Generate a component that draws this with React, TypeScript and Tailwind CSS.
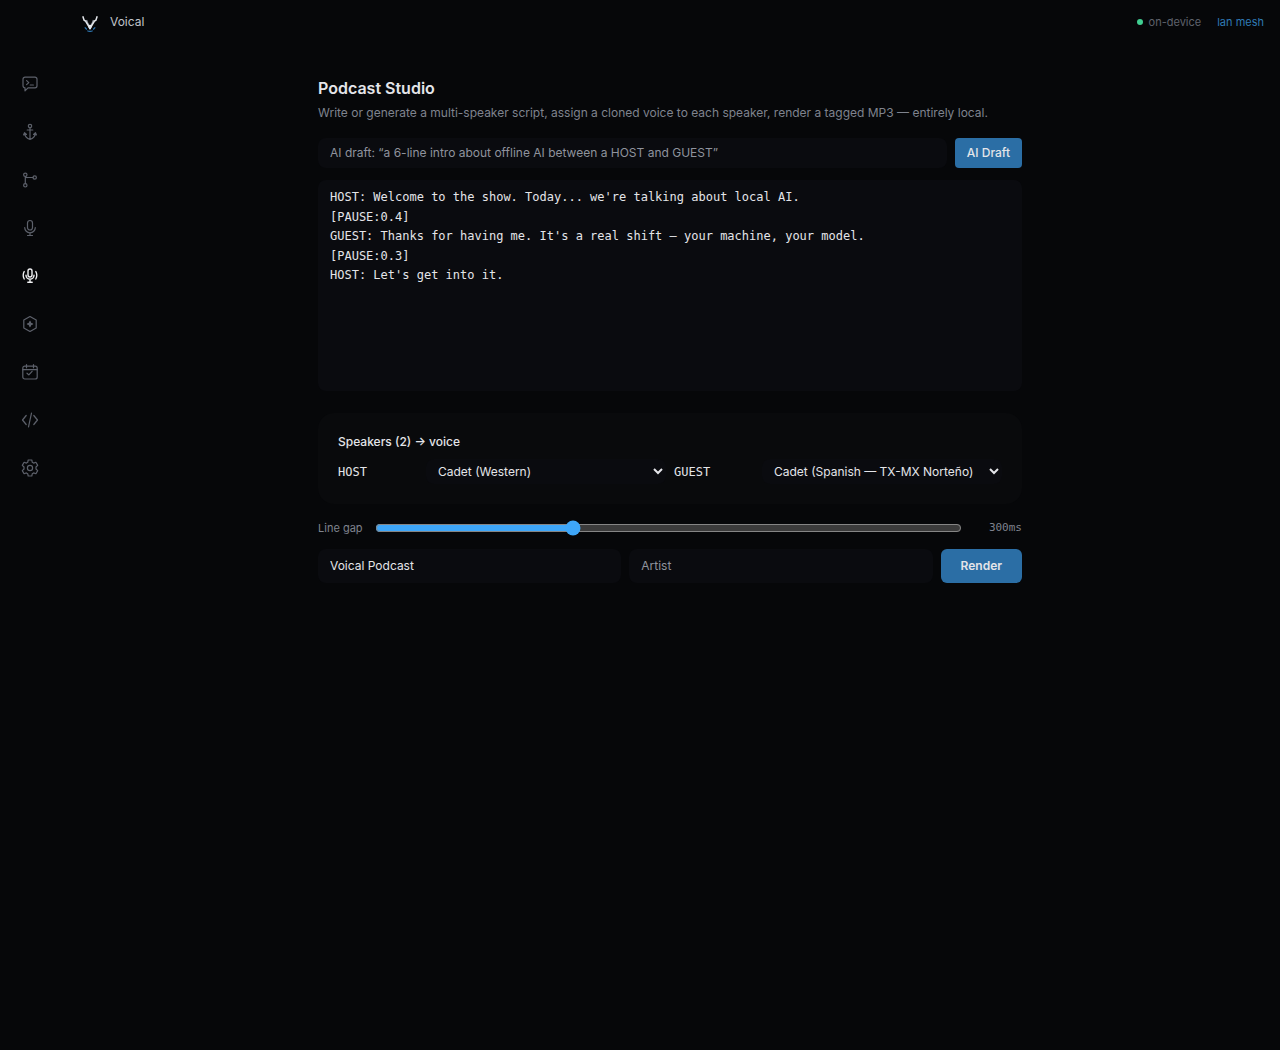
import type React from "react"

import { useState } from "react"

const voices = [
  { id: "cadet-western", name: "Cadet (Western)" },
  { id: "cadet-spanish", name: "Cadet (Spanish — TX-MX Norteño)" },
]

const initialScript = `HOST: Welcome to the show. Today... we're talking about local AI.
[PAUSE:0.4]
GUEST: Thanks for having me. It's a real shift — your machine, your model.
[PAUSE:0.3]
HOST: Let's get into it.`

interface NavItem {
  id: string
  icon: React.ReactNode
}

const navItems: NavItem[] = [
  {
    id: "chat",
    icon: (
      <>
        <path d="M4 2.2h10a2 2 0 0 1 2 2v6.6a2 2 0 0 1-2 2H7L4 15.8v-3a2 2 0 0 1-2-2V4.2a2 2 0 0 1 2-2z" />
        <path d="M5.6 5.6l2.200 2-2.200 2M9.200 10h3.200" />
      </>
    ),
  },
  {
    id: "anchor",
    icon: (
      <>
        <circle cx="9" cy="3" r="1.7" />
        <path d="M9 4.7v11.5M6.2 7h5.6M3.8 10.5c.2 3.500 2.300 5 5.200 5.800 2.900-.8 5-2.300 5.200-5.800" />
        <path d="M2.600 12l.9-2.300 2 1.700zM15.400 12l-.9-2.300-2 1.700z" fill="currentColor" />
      </>
    ),
  },
  {
    id: "flow",
    icon: (
      <>
        <circle cx="4.3" cy="3.8" r="1.7" />
        <circle cx="4.3" cy="14.3" r="1.7" />
        <circle cx="13.7" cy="6.5" r="1.7" />
        <path d="M4.3 5.5v7.100M12 6.500H6.500a2.200 2.200 0 0 1-2.200-1" />
      </>
    ),
  },
  {
    id: "voice",
    icon: (
      <>
        <rect x="6.5" y="1.5" width="5" height="9.5" rx="2.5" />
        <path d="M3.7 8.5a5.300 5.300 0 0 0 10.600 0M9 13.800v2.700M6.500 16.500h5" />
      </>
    ),
  },
  {
    id: "podcast",
    icon: (
      <>
        <rect x="7" y="2" width="4" height="8" rx="2" />
        <path d="M5 8.200a4 4 0 0 0 8 0M9 12.200v3M6.800 15.300h4.400M3.200 4.500c-1.300 2.400-1.300 5.200 0 7.500M14.800 4.500c1.300 2.400 1.300 5.200 0 7.500" />
      </>
    ),
  },
  {
    id: "models",
    icon: (
      <>
        <path d="M9 1.500l6.200 3.600v7.800L9 16.500l-6.200-3.600V5.100z" />
        <path d="M9 6.400l.8 1.800 1.800.8-1.800.8L9 11.600l-.8-1.800L6.400 9l1.800-.8z" fill="currentColor" />
      </>
    ),
  },
  {
    id: "schedule",
    icon: (
      <>
        <rect x="1.8" y="3.2" width="14.4" height="12.8" rx="2" />
        <path d="M1.800 6.700h14.400M5.500 1.500v3.300M12.500 1.500v3.300M6 10.200l1.800 1.700 3.300-3.600" />
      </>
    ),
  },
  {
    id: "code",
    icon: <path d="M5.200 4.500L1.500 9l3.700 4.500M12.800 4.500L16.500 9l-3.700 4.500M10.500 2.200l-3 13.600" />,
  },
  {
    id: "settings",
    icon: (
      <>
        <path d="M7.200 1h3.600l.5 2.300 1.300.8 2.300-.8 1.800 3.100L15 8v2l1.700 1.600-1.800 3.100-2.300-.8-1.300.8-.5 2.300H7.200l-.5-2.300-1.300-.8-2.300.8-1.800-3.100L3 10V8L1.300 6.400l1.800-3.100 2.300.8 1.300-.8z" />
        <circle cx="9" cy="9" r="2.6" />
      </>
    ),
  },
]

function Logo() {
  return (
    <svg className="h-4 w-4" viewBox="0 0 16 16" fill="none" aria-hidden="true">
      <path d="M4.500 4l1.200 3 2.300 4.500L10.300 7l1.200-3" stroke="#858a93" strokeWidth="1.400" />
      <path d="M.8.300l1.300 3.900 1.500.9L8 12.500l4.400-7.400 1.500-.9L15.200.300" stroke="#e4e7ec" strokeWidth="1.500" />
      <path d="M5.800 9.500L8 8.700l2.200.8L8.800 13H7.200z" fill="#e4e7ec" />
      <path d="M2.800 11.300l2 2.200M13.200 11.300l-2 2.200M5.300 14.800c1.700.7 3.700.7 5.400 0" stroke="#2f79b5" strokeWidth="1.200" />
    </svg>
  )
}

export default function App() {
  const [active, setActive] = useState("podcast")
  const [prompt, setPrompt] = useState("")
  const [script, setScript] = useState(initialScript)
  const [speakers, setSpeakers] = useState<Record<string, string>>({
    HOST: "cadet-western",
    GUEST: "cadet-spanish",
  })
  const [gap, setGap] = useState(300)
  const [title, setTitle] = useState("Voical Podcast")
  const [artist, setArtist] = useState("")

  const names = Object.keys(speakers)

  return (
    <div className="flex min-h-screen flex-col bg-[#060709] font-[Inter,sans-serif] text-xs/[18px] text-[#e4e5e9] scheme-dark">
      <header className="flex h-11 items-center justify-between pr-4 pl-[82px]">
        <div className="flex items-center gap-3">
          <div className="pt-1">
            <Logo />
          </div>
          <span className="text-[#c0c3ca]">Voical</span>
        </div>
        <div className="flex items-center gap-4 text-[11px]">
          <span className="flex items-center gap-1.5 text-[#5f626c]">
            <span className="h-1.5 w-1.5 rounded-full bg-[#40cf92]" />
            on-device
          </span>
          <a href="#mesh" className="text-[#2f7ab4]">
            lan mesh
          </a>
        </div>
      </header>

      <div className="flex flex-1">
        <nav className="flex w-[60px] shrink-0 flex-col items-center gap-2 pt-5">
          {navItems.map((item) => (
            <button
              key={item.id}
              type="button"
              aria-label={item.id}
              onClick={() => setActive(item.id)}
              className={`flex h-10 w-10 items-center justify-center ${
                active === item.id ? "text-[#f1f2f4]" : "text-[#5d616b]"
              }`}
            >
              <svg
                className="h-[18px] w-[18px]"
                viewBox="0 0 18 18"
                fill="none"
                stroke="currentColor"
                strokeWidth={active === item.id ? 1.4 : 1.2}
                strokeLinecap="round"
                strokeLinejoin="round"
              >
                {item.icon}
              </svg>
            </button>
          ))}
        </nav>

        <main className="min-w-0 flex-1">
          <div className="mx-auto max-w-3xl p-8">
            <h1 className="text-base font-semibold">Podcast Studio</h1>
            <p className="mt-1 mb-4 text-[#7f838e]">
              Write or generate a multi-speaker script, assign a cloned voice to each speaker, render a tagged MP3 —
              entirely local.
            </p>

            <form className="mb-3 flex gap-2" onSubmit={(e) => e.preventDefault()}>
              <input
                aria-label="AI draft prompt"
                value={prompt}
                onChange={(e) => setPrompt(e.target.value)}
                placeholder="AI draft: “a 6-line intro about offline AI between a HOST and GUEST”"
                className="min-w-0 flex-1 rounded-lg bg-[#0a0b0f] px-3 py-1.5 placeholder:text-[#8f939d]"
              />
              <button type="submit" className="rounded bg-[#2b6ea5] px-3 py-1.5 font-medium">
                AI Draft
              </button>
            </form>

            <textarea
              aria-label="Script"
              rows={10}
              value={script}
              onChange={(e) => setScript(e.target.value)}
              className="mb-[17px] w-full resize-none rounded-lg bg-[#0a0b0f] px-3 py-2 font-['DejaVu_Sans_Mono',monospace] text-xs leading-relaxed"
            />

            <section className="mb-4 rounded-2xl bg-[#090a0c] p-5">
              <h2 className="mb-2 font-medium">Speakers ({names.length}) → voice</h2>
              <div className="grid grid-cols-2 gap-2">
                {names.map((name) => (
                  <div key={name} className="flex items-center gap-2">
                    <label htmlFor={`voice-${name}`} className="w-20 font-['DejaVu_Sans_Mono',monospace]">
                      {name}
                    </label>
                    <select
                      id={`voice-${name}`}
                      value={speakers[name]}
                      onChange={(e) => setSpeakers({ ...speakers, [name]: e.target.value })}
                      className="min-w-0 flex-1 rounded-lg bg-[#0a0b0f] px-2 py-1"
                    >
                      {voices.map((voice) => (
                        <option key={voice.id} value={voice.id}>
                          {voice.name}
                        </option>
                      ))}
                    </select>
                  </div>
                ))}
              </div>
            </section>

            <div className="mb-[13px] flex items-center gap-3 text-[11px]/4 text-[#7f838e]">
              <label htmlFor="line-gap">Line gap</label>
              <input
                id="line-gap"
                type="range"
                min={0}
                max={900}
                step={50}
                value={gap}
                onChange={(e) => setGap(Number(e.target.value))}
                className="min-w-0 flex-1 accent-[#3ea6f8]"
              />
              <span className="w-12 text-right font-['DejaVu_Sans_Mono',monospace]">{gap}ms</span>
            </div>

            <div className="flex gap-2">
              <input
                aria-label="Title"
                value={title}
                onChange={(e) => setTitle(e.target.value)}
                className="min-w-0 flex-1 rounded-lg bg-[#0a0b0f] px-3 py-2"
              />
              <input
                aria-label="Artist"
                value={artist}
                onChange={(e) => setArtist(e.target.value)}
                placeholder="Artist"
                className="min-w-0 flex-1 rounded-lg bg-[#0a0b0f] px-3 py-2 placeholder:text-[#8f939d]"
              />
              <button type="button" className="rounded-md bg-[#2b6ea5] px-5 py-2 font-semibold">
                Render
              </button>
            </div>
          </div>
        </main>
      </div>
    </div>
  )
}
